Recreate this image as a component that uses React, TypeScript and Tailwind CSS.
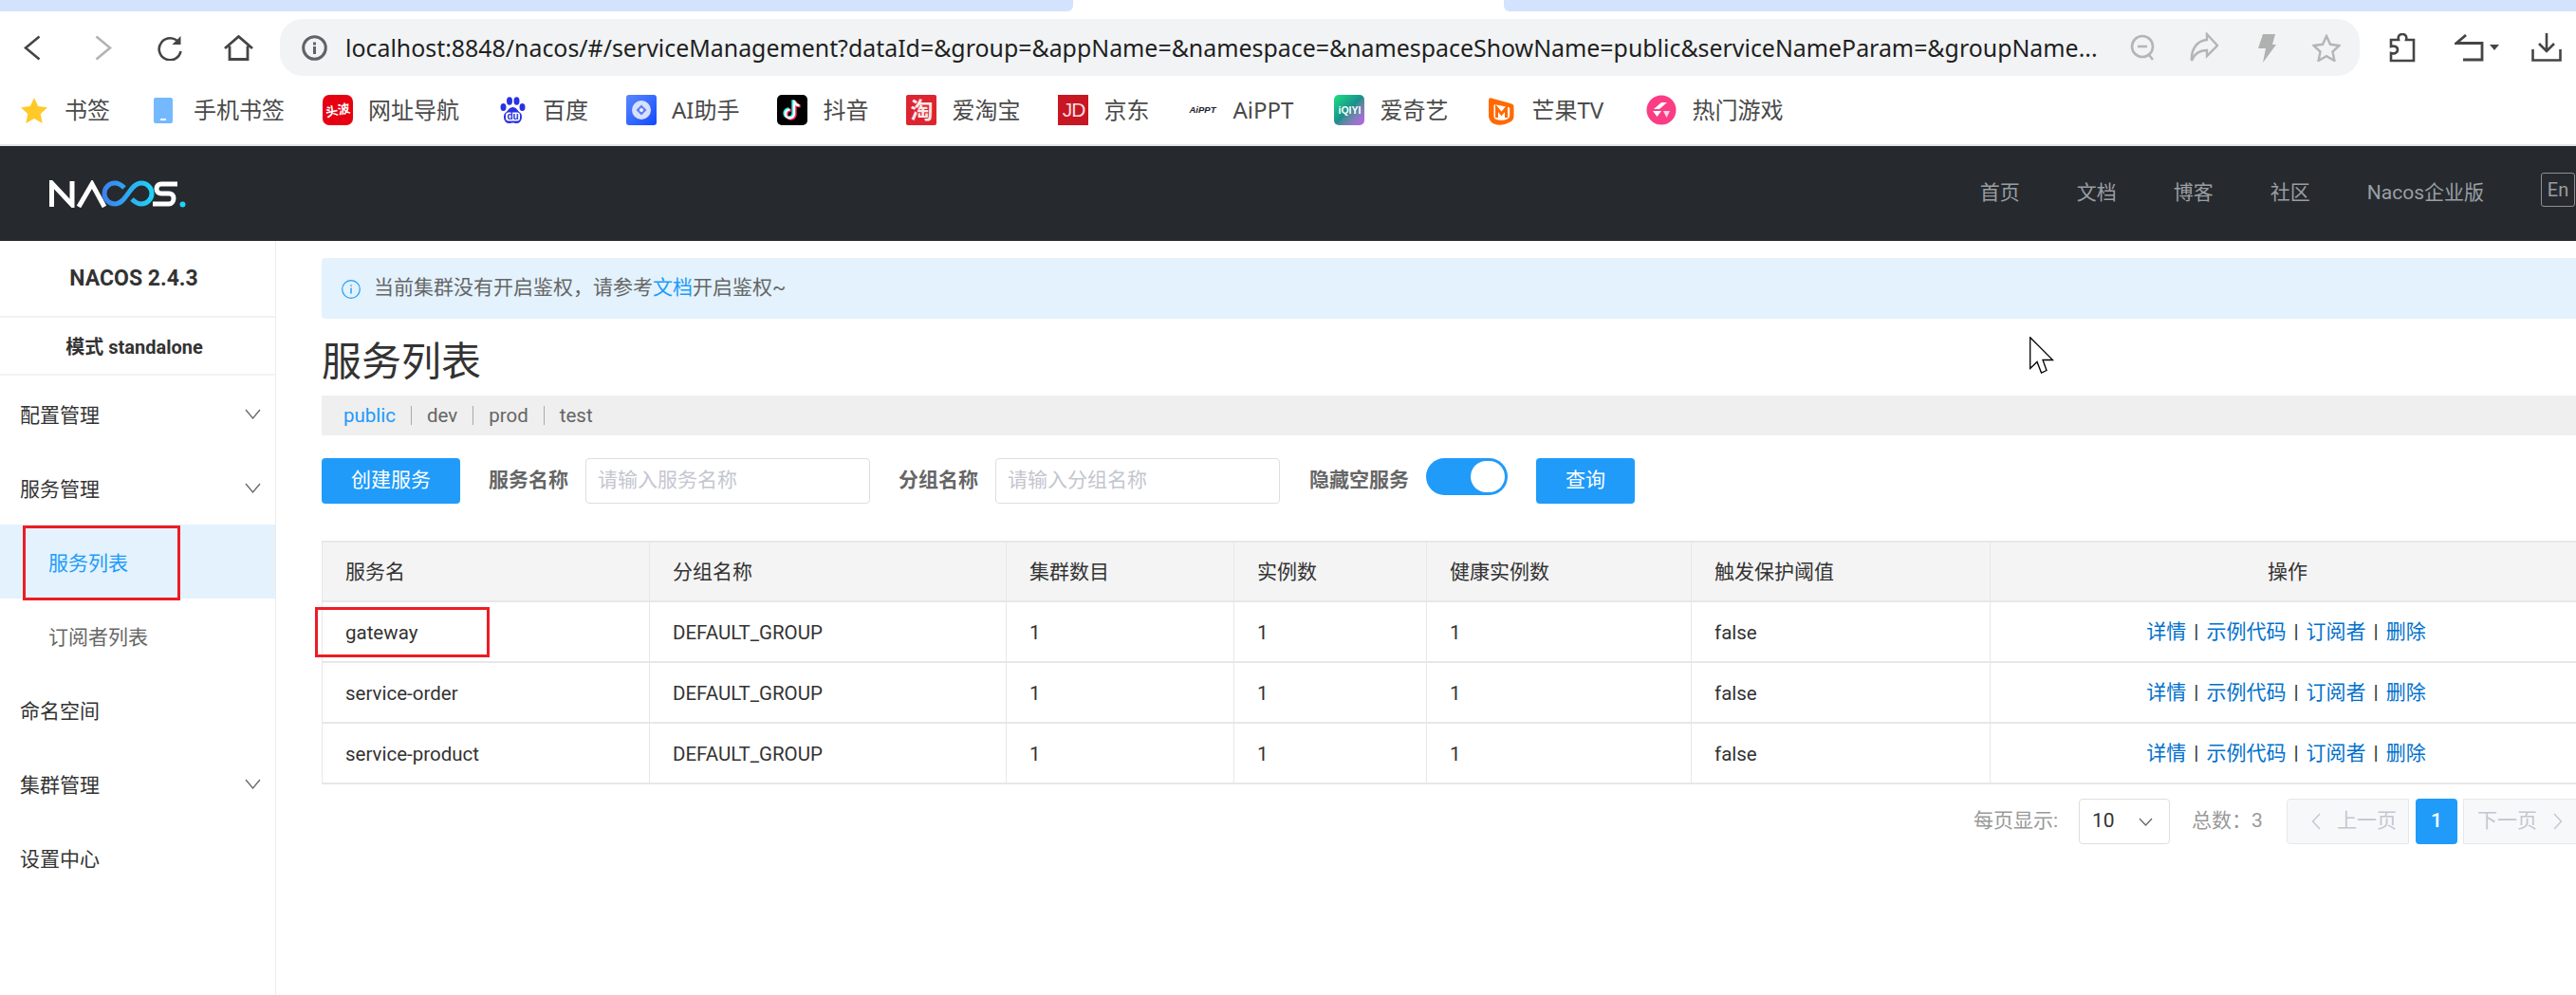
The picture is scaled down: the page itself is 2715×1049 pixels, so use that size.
import React from "react";

const ui = "font-[family-name:Roboto,'Noto_Sans_CJK_SC',sans-serif]";
const chrome = "font-[family-name:'Noto_Sans','Noto_Sans_CJK_SC',sans-serif]";

function Ico({ w, h, vb, children, className }: { w: number; h: number; vb: string; children: React.ReactNode; className?: string }) {
  return (
    <svg width={w} height={h} viewBox={vb} fill="none" className={className}>
      {children}
    </svg>
  );
}

function Bookmark({ icon, label, textClass }: { icon: React.ReactNode; label: string; textClass?: string }) {
  return (
    <div className="flex items-center gap-4">
      <div className="flex h-8 w-8 items-center justify-center overflow-hidden">{icon}</div>
      <span className={`text-[24px] leading-8 text-[#4a4a4a] whitespace-nowrap ${textClass ?? ""}`}>{label}</span>
    </div>
  );
}

const bookmarks: { label: string; icon: React.ReactNode; textClass?: string }[] = [
  {
    label: "书签",
    icon: (
      <Ico w={28} h={27} vb="0 0 28 27">
        <path d="M14 0l4.2 9 9.8 1.2-7.2 6.7L22.7 27 14 22l-8.7 5 1.9-10.1L0 10.2 9.8 9z" fill="#ffca28" />
      </Ico>
    ),
  },
  {
    label: "手机书签",
    icon: (
      <div className="flex h-[27px] w-5 items-end justify-center rounded-[2px] bg-[#74b9ff] pb-[3px]">
        <div className="h-[2px] w-[6px] bg-white" />
      </div>
    ),
  },
  {
    label: "网址导航",
    icon: (
      <div className="flex h-8 w-8 items-center justify-center rounded-[7px] bg-[#e60012]">
        <span className="text-[13px] leading-[13px] font-bold text-white -rotate-12">头波</span>
      </div>
    ),
  },
  {
    label: "百度",
    icon: (
      <Ico w={27} h={29} vb="0 0 27 29">
        <ellipse cx="3.5" cy="11" rx="3" ry="4" fill="#2932e1" />
        <ellipse cx="10" cy="4.5" rx="3" ry="4.2" fill="#2932e1" />
        <ellipse cx="17.5" cy="4.5" rx="3" ry="4.2" fill="#2932e1" />
        <ellipse cx="23.5" cy="11" rx="3" ry="4" fill="#2932e1" />
        <path d="M13.5 11c4 0 5 4 8 6 3 3 1.500 11-4 11-2 0-2.500-.6-4-.6s-2 .6-4 .6c-5.500 0-7-8-4-11 3-2 4-6 8-6z" fill="#2932e1" />
        <rect x="6" y="16.500" width="15" height="9" rx="3" fill="#fff" />
        <text x="13.500" y="24" textAnchor="middle" fontSize="10" fontWeight="700" fill="#2932e1" fontFamily="Liberation Sans">du</text>
      </Ico>
    ),
  },
  {
    label: "AI助手",
    icon: (
      <div className="flex h-8 w-8 items-center justify-center rounded-[3px] bg-gradient-to-br from-[#5a86ff] to-[#0f47ff]">
        <Ico w={24} h={24} vb="0 0 24 24">
          <circle cx="12" cy="12" r="10" fill="#d8e0fb" />
          <path d="M12 6.500l5.500 5.500-5.500 5.500L6.500 12z" fill="#5d7ff5" />
          <circle cx="12" cy="12" r="2" fill="#eef2ff" />
        </Ico>
      </div>
    ),
  },
  {
    label: "抖音",
    icon: (
      <div className="flex h-8 w-8 items-center justify-center rounded-[5px] bg-black">
        <Ico w={24} h={26} vb="0 0 24 26">
          <path d="M14 3v14a4.500 4.500 0 1 1-4.500-4.500M14 3c.4 3 2.500 5 5.500 5.300" stroke="#25f4ee" strokeWidth="3" transform="translate(-1.200 -.8)" />
          <path d="M14 3v14a4.500 4.500 0 1 1-4.500-4.500M14 3c.4 3 2.500 5 5.500 5.300" stroke="#fe2c55" strokeWidth="3" transform="translate(1.200 .8)" />
          <path d="M14 3v14a4.500 4.500 0 1 1-4.500-4.500M14 3c.4 3 2.500 5 5.500 5.300" stroke="#fff" strokeWidth="2.400" />
        </Ico>
      </div>
    ),
  },
  {
    label: "爱淘宝",
    icon: (
      <div className="flex h-8 w-8 items-center justify-center rounded-[2px] bg-[#dc2530] text-[24px] leading-8 font-bold text-[#fbe9e9]">淘</div>
    ),
  },
  {
    label: "京东",
    icon: (
      <div className="flex h-8 w-8 items-center justify-center bg-[#c91623] font-[family-name:'Liberation_Sans',sans-serif] text-[21px] leading-8 tracking-[-1px] text-[#f8dfe1]">JD</div>
    ),
  },
  {
    label: "AiPPT",
    textClass: "w-[67px]",
    icon: <span className="font-[family-name:'Liberation_Sans',sans-serif] text-[9.500px] leading-8 font-bold italic text-[#22202e]">AiPPT</span>,
  },
  {
    label: "爱奇艺",
    icon: (
      <div className="flex h-8 w-8 items-center justify-center rounded-[5px] bg-gradient-to-br from-[#1fe27a] via-[#1b8f8c] to-[#c255ef] font-[family-name:'Liberation_Sans',sans-serif] text-[10.500px] leading-8 font-bold text-white">iQIYI</div>
    ),
  },
  {
    label: "芒果TV",
    textClass: "w-[81px]",
    icon: (
      <Ico w={32} h={32} vb="0 0 32 32">
        <path d="M3 6c0-2 1-3 3-2.500L26 9c3 .8 3.500 2 3.500 4v9c0 3-1 5-3.500 6.500l-6 2.500c-4 1-8 1-11.500-.5C4.500 28.500 3 25 3 21z" fill="#ff6a00" />
        <path d="M8.500 11.500c0-1 .6-1.500 1.500-1.300l14 2.800c.8.2 1.200.7 1.200 1.500v7c0 1.800-.8 3-2.200 3.700-4 2-9 2-12.500.5-1.300-.6-2-1.700-2-3.200z" fill="#fff" />
        <path d="M11.500 24V14l5 6 5-6v10" stroke="#ff6a00" strokeWidth="3" />
      </Ico>
    ),
  },
  {
    label: "热门游戏",
    icon: (
      <Ico w={32} h={32} vb="0 0 32 32">
        <circle cx="16" cy="16" r="15.500" fill="#fa3d84" />
        <path d="M8 15l8-7h6l-8 7z" fill="#fff" />
        <path d="M7 17h9l-4.500 6z" fill="#fff" />
        <path d="M18 17h7l-3.500 7z" fill="#ffd5e4" />
      </Ico>
    ),
  },
];

function Chevron() {
  return (
    <Ico w={17} h={11} vb="0 0 17 11">
      <path d="M1 1l7.500 9L16 1" stroke="#666" strokeWidth="1.300" />
    </Ico>
  );
}

function BrowserChrome() {
  return (
    <div className={`${chrome} flex flex-col`}>
      <div className="flex h-3 bg-white">
        <div className="flex-1 rounded-br-[6px] bg-[#d3e3fd]" />
        <div className="w-[454px] bg-white" />
        <div className="flex-1 rounded-bl-[6px] bg-[#d3e3fd]" />
      </div>
      <div className="flex h-[142px] flex-col border-b-2 border-[#e3e5e7] bg-white">
        <div className="mt-2 flex h-[60px] items-center">
          <div className="flex w-[295px] items-center">
            <Ico w={18} h={27} vb="0 0 18 27" className="ml-[25px]">
              <path d="M16.500 1.500L2 13.500l14.500 12" stroke="#454545" strokeWidth="2.600" />
            </Ico>
            <Ico w={18} h={27} vb="0 0 18 27" className="ml-[57px]">
              <path d="M1.500 1.500L16 13.500l-14.500 12" stroke="#b3b3b3" strokeWidth="2.600" />
            </Ico>
            <Ico w={26} h={27} vb="0 0 26 27" className="ml-[48px]">
              <path d="M22.500 8A11.500 11.500 0 1 0 24.500 17" stroke="#454545" strokeWidth="2.600" />
              <path d="M24.500 1v9h-9z" fill="#454545" />
            </Ico>
            <Ico w={31} h={27} vb="0 0 31 27" className="ml-[44px]">
              <path d="M1 14L15.500 1.500 30 14M6 11.500V25.500h19V11.500" stroke="#454545" strokeWidth="2.800" />
            </Ico>
          </div>
          <div className="flex h-[60px] w-[2192px] items-center rounded-[24px] bg-[#f1f3f4]">
            <Ico w={27} h={27} vb="0 0 27 27" className="ml-[23px]">
              <circle cx="13.500" cy="13.500" r="11.800" stroke="#5f6368" strokeWidth="3" />
              <rect x="12" y="12" width="3" height="8" fill="#5f6368" />
              <rect x="12" y="7.500" width="3" height="3" fill="#5f6368" />
            </Ico>
            <div className="ml-[19px] w-[1855px] overflow-hidden whitespace-nowrap text-[24.900px] leading-8 text-[#1f1f1f]">
              localhost:8848/nacos/#/serviceManagement?dataId=&amp;group=&amp;appName=&amp;namespace=&amp;namespaceShowName=public&amp;serviceNameParam=&amp;groupName...
            </div>
            <Ico w={27} h={28} vb="0 0 27 28" className="ml-[26px]">
              <circle cx="13" cy="13" r="11" stroke="#b5b5b5" strokeWidth="2.600" />
              <path d="M8 13h10M20 22l4 5" stroke="#b5b5b5" strokeWidth="2.600" />
            </Ico>
            <Ico w={30} h={32} vb="0 0 30 32" className="ml-[36px]">
              <path d="M18 2l11 12-11 11v-6C10 19 5 22 2 30 1 20 6 9 18 8z" stroke="#b5b5b5" strokeWidth="2.400" />
            </Ico>
            <Ico w={20} h={31} vb="0 0 20 31" className="ml-[41px]">
              <path d="M6 1h13l-3 11h4L6 31l3-15H1z" fill="#b0b0b0" />
            </Ico>
            <Ico w={30} h={29} vb="0 0 30 29" className="ml-[38px]">
              <path d="M15 2l4 8.800 9.500 1.200-7 6.500 1.900 9.500-8.400-4.800-8.400 4.800 1.900-9.500-7-6.500L11 10.800z" stroke="#b5b5b5" strokeWidth="2.400" />
            </Ico>
          </div>
          <Ico w={28} h={31} vb="0 0 28 31" className="ml-[31px]">
            <path d="M2 29V21c3 1 7 0 7-3.500S5 13 2 14V7h8c-1-4 1-6 4-6s5 2 4 6h8v22z" stroke="#454545" strokeWidth="2.600" />
          </Ico>
          <Ico w={36} h={29} vb="0 0 36 29" className="ml-[41px]">
            <path d="M12 1L2 9.500h27V27H9" stroke="#454545" strokeWidth="2.800" />
          </Ico>
          <div className="ml-[1px] h-0 w-0 border-x-[5px] border-t-[6px] border-x-transparent border-t-[#454545]" />
          <Ico w={32} h={30} vb="0 0 32 30" className="ml-[34px]">
            <path d="M16 0v19M8 11l8 8 8-8M1.500 17v11.500h29V17" stroke="#454545" strokeWidth="2.600" />
          </Ico>
        </div>
        <div className="mt-5 flex items-center gap-10 pl-5">
          {bookmarks.map((b) => (
            <Bookmark key={b.label} icon={b.icon} label={b.label} textClass={b.textClass} />
          ))}
        </div>
      </div>
    </div>
  );
}

function Logo() {
  return (
    <Ico w={144} h={29} vb="0 0 144 29">
      <path d="M2.500 28V3L24 26V1" stroke="#fff" strokeWidth="5" />
      <path d="M31 28L45 4l13 24" stroke="#fff" strokeWidth="5" />
      <defs>
        <linearGradient id="lg" x1="0" y1="0" x2="1" y2="0">
          <stop offset="0" stopColor="#3b82f0" />
          <stop offset="1" stopColor="#1fd2f7" />
        </linearGradient>
      </defs>
      <path d="M79 8c-3-3-6-5-10-5a11 11 0 1 0 0 22c7 0 11-7 14-11s7-11 14-11a11 11 0 1 1 0 22c-4 0-7-2-10-5" stroke="url(#lg)" strokeWidth="5" />
      <path d="M136 4h-17c-3 0-5 2-5 5s2 5 5 5h8c3 0 5 2 5 5s-2 6-5 6h-17" stroke="#fff" strokeWidth="5" transform="translate(-1 0)" />
      <circle cx="140.500" cy="25.500" r="3" fill="#1fd2f7" />
    </Ico>
  );
}

function Header() {
  const items = ["首页", "文档", "博客", "社区", "Nacos企业版"];
  return (
    <div className={`${ui} flex h-[100px] shrink-0 items-center bg-[#262a2e] pl-[52px] pr-[1px] text-[21px] text-[#9a9ea3]`}>
      <Logo />
      <div className="ml-auto flex items-center gap-[60px]">
        {items.map((t) => (
          <span key={t}>{t}</span>
        ))}
        <span className="mb-2 flex h-9 w-9 items-center justify-center rounded-[3px] border border-[#8d9196] text-[20px]">En</span>
      </div>
    </div>
  );
}

function SideItem({ label, chevron, sub, active }: { label: string; chevron?: boolean; sub?: boolean; active?: boolean }) {
  return (
    <div
      className={`flex h-[78px] items-center pr-[15px] text-[21px] ${sub ? "pl-[51px]" : "pl-[21px]"} ${
        active ? "bg-[#e3f2fd] text-[#209bfa]" : sub ? "text-[#666]" : "text-[#333]"
      }`}
    >
      <span className="pt-[5px]">{label}</span>
      {chevron && (
        <span className="ml-auto">
          <Chevron />
        </span>
      )}
    </div>
  );
}

function Sidebar() {
  return (
    <div className="h-full w-[291px] shrink-0 border-r border-[#ececec] bg-white">
      <div className="flex h-[81px] items-center justify-center border-b-2 border-[#f2f2f2] pr-[8px] pt-[2px] text-[23px] font-bold text-[#333]">NACOS 2.4.3</div>
      <div className="flex h-[61px] items-center justify-center border-b-2 border-[#f2f2f2] pr-[7px] pt-[2px] text-[20px] font-bold text-[#333]">模式 standalone</div>
      <div className="pt-[1px]">
        <SideItem label="配置管理" chevron />
        <SideItem label="服务管理" chevron />
        <SideItem label="服务列表" sub active />
        <SideItem label="订阅者列表" sub />
        <SideItem label="命名空间" />
        <SideItem label="集群管理" chevron />
        <SideItem label="设置中心" />
      </div>
    </div>
  );
}

const rows = ["gateway", "service-order", "service-product"];
const th = "border-t-2 border-b-2 border-r border-[#e6e7e8] bg-[#f4f4f4] px-6 pt-[2px] font-normal";
const td = "border-b-2 border-r border-[#e6e7e8] px-6 pt-[2px]";
const link = "text-[#0070cc]";

function Ops() {
  return (
    <span className="whitespace-nowrap pr-[3px]">
      <span className={link}>详情</span>
      <span className="mx-[8px]">|</span>
      <span className={link}>示例代码</span>
      <span className="mx-[8px]">|</span>
      <span className={link}>订阅者</span>
      <span className="mx-[8px]">|</span>
      <span className={link}>删除</span>
    </span>
  );
}

function Table() {
  return (
    <table className="mt-[39px] w-[2386px] table-fixed border-separate border-spacing-0 text-[21px] text-[#333]">
      <colgroup>
        <col className="w-[346px]" />
        <col className="w-[376px]" />
        <col className="w-[240px]" />
        <col className="w-[203px]" />
        <col className="w-[279px]" />
        <col className="w-[315px]" />
        <col className="w-[627px]" />
      </colgroup>
      <thead>
        <tr className="h-[65px]">
          <th className={`${th} border-l text-left`}>服务名</th>
          <th className={`${th} text-left`}>分组名称</th>
          <th className={`${th} text-left`}>集群数目</th>
          <th className={`${th} text-left`}>实例数</th>
          <th className={`${th} text-left`}>健康实例数</th>
          <th className={`${th} text-left`}>触发保护阈值</th>
          <th className={`${th} text-center`}>操作</th>
        </tr>
      </thead>
      <tbody>
        {rows.map((r) => (
          <tr key={r} className="h-16 text-[20.500px]">
            <td className={`${td} border-l`}>{r}</td>
            <td className={td}>DEFAULT_GROUP</td>
            <td className={td}>1</td>
            <td className={td}>1</td>
            <td className={td}>1</td>
            <td className={td}>false</td>
            <td className={`${td} text-center text-[21px]`}>
              <Ops />
            </td>
          </tr>
        ))}
      </tbody>
    </table>
  );
}

function Pagination() {
  return (
    <div className="mt-[15px] flex h-12 w-[2386px] items-center text-[21px]">
      <span className="ml-[1741px] w-[93px] whitespace-nowrap text-[#999]">每页显示:</span>
      <div className="ml-[18px] flex h-12 w-24 items-center justify-between rounded-[4px] border border-[#dcdee3] pl-[13px] pr-[17px] text-[#333]">
        <span>10</span>
        <Ico w={15} h={9} vb="0 0 15 9">
          <path d="M1 1l6.500 7L14 1" stroke="#666" strokeWidth="1.300" />
        </Ico>
      </div>
      <span className="ml-[23px] w-[75px] whitespace-nowrap text-[#999]">总数：3</span>
      <div className="ml-[25px] flex h-12 w-[129px] items-center gap-[17px] rounded-l-[4px] border border-[#e6e7eb] bg-[#f7f8fa] pl-[25px] text-[#c4c6cf]">
        <Ico w={10} h={18} vb="0 0 10 18">
          <path d="M9 1L1.500 9 9 17" stroke="#c4c6cf" strokeWidth="1.400" />
        </Ico>
        <span>上一页</span>
      </div>
      <div className="ml-[7px] flex h-12 w-11 items-center justify-center rounded-[4px] bg-[#209bfa] font-medium text-white">1</div>
      <div className="ml-[6px] flex h-12 w-[129px] items-center gap-[17px] rounded-r-[4px] border border-[#e6e7eb] bg-[#f7f8fa] pl-[14px] text-[#c4c6cf]">
        <span>下一页</span>
        <Ico w={10} h={18} vb="0 0 10 18">
          <path d="M1 1l7.500 8L1 17" stroke="#c4c6cf" strokeWidth="1.400" />
        </Ico>
      </div>
    </div>
  );
}

function Main() {
  return (
    <div className="min-w-0 flex-1 overflow-hidden pl-12 pt-[18px]">
      <div className="flex h-16 items-center rounded-l-[4px] bg-[#e3f2fd] pl-[21px] text-[21px] text-[#666]">
        <Ico w={20} h={20} vb="0 0 20 20" className="mt-[2px]">
          <circle cx="10" cy="10" r="9.300" stroke="#209bfa" strokeWidth="1.200" />
          <path d="M10 8.500v6M10 5.300v1.500" stroke="#209bfa" strokeWidth="1.400" />
        </Ico>
        <span className="ml-[14px]">
          当前集群没有开启鉴权，请参考<span className="text-[#209bfa]">文档</span>开启鉴权~
        </span>
      </div>
      <div className="flex h-[81px] items-center pt-[10px] text-[42px] leading-none text-[#333]">服务列表</div>
      <div className="flex h-[42px] items-center bg-[#efefef] pl-[23px] text-[20.500px] text-[#666]">
        <span className="text-[#209bfa]">public</span>
        <span className="mx-[16px] h-[20px] w-px bg-[#aaa]" />
        <span>dev</span>
        <span className="mx-[16px] h-[20px] w-px bg-[#aaa]" />
        <span>prod</span>
        <span className="mx-[16px] h-[20px] w-px bg-[#aaa]" />
        <span>test</span>
      </div>
      <div className="mt-6 flex h-12 items-start text-[21px]">
        <div className="flex h-12 w-[146px] items-center justify-center rounded-[4px] bg-[#209bfa] text-white">创建服务</div>
        <span className="ml-[30px] flex h-12 w-[85px] items-center font-bold text-[#666]">服务名称</span>
        <div className="ml-[17px] flex h-12 w-[300px] items-center rounded-[4px] border border-[#dcdee3] pl-3 text-[#c4c6cf]">请输入服务名称</div>
        <span className="ml-[30px] flex h-12 w-[84px] items-center font-bold text-[#666]">分组名称</span>
        <div className="ml-[18px] flex h-12 w-[300px] items-center rounded-[4px] border border-[#dcdee3] pl-3 text-[#c4c6cf]">请输入分组名称</div>
        <span className="ml-[31px] flex h-12 w-[105px] items-center font-bold text-[#666]">隐藏空服务</span>
        <div className="ml-[18px] flex h-[39px] w-[86px] items-center justify-end rounded-full bg-[#209bfa] pr-[3px]">
          <div className="h-[33px] w-[36px] rounded-full bg-white" />
        </div>
        <div className="ml-[30px] flex h-12 w-[104px] items-center justify-center rounded-[4px] bg-[#209bfa] text-white">查询</div>
      </div>
      <Table />
      <Pagination />
    </div>
  );
}

export default function App() {
  return (
    <div className={`${ui} relative flex h-[1049px] w-[2715px] flex-col overflow-hidden bg-white`}>
      <BrowserChrome />
      <Header />
      <div className="flex min-h-0 flex-1">
        <Sidebar />
        <Main />
      </div>
      <div className="absolute left-[24px] top-[554px] h-[79px] w-[166px] border-[3px] border-[#ed1c24]" />
      <div className="absolute left-[332px] top-[640px] h-[53px] w-[184px] border-[3px] border-[#ed1c24]" />
      <Ico w={27} h={40} vb="0 0 27 40" className="absolute left-[2139px] top-[355px]">
        <path d="M0.700 0.700V33.500L8 26.500L12.500 38L18 35.500L14 24.500H24.500z" fill="#fff" stroke="#000" strokeWidth="1.300" />
      </Ico>
    </div>
  );
}
